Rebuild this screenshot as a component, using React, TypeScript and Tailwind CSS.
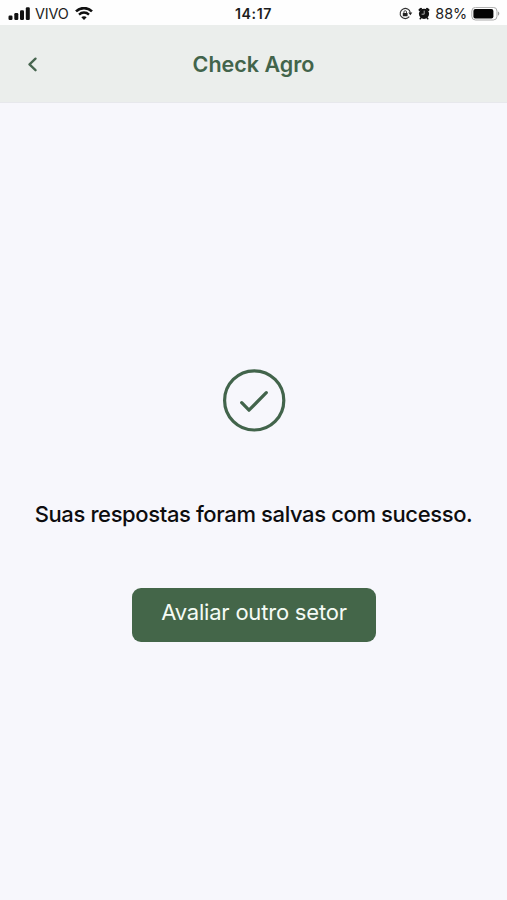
const SignalIcon = () => (
  <svg width="22" height="14" viewBox="0 0 22 14" fill="#111">
    <rect x="0.5" y="8.5" width="4" height="4.5" rx="1.2" />
    <rect x="6.3" y="6" width="4" height="7" rx="1.2" />
    <rect x="12" y="3.3" width="4" height="9.7" rx="1.2" />
    <rect x="17.8" y="0.3" width="4" height="12.7" rx="1.2" />
  </svg>
);

const WifiIcon = () => (
  <svg width="18" height="14" viewBox="0 0 18 14" fill="none" stroke="#111">
    <path d="M1 4.4C5.5 0 12.5 0 17 4.4" strokeWidth="2.6" />
    <path d="M4 7.6C6.9 4.8 11.1 4.8 14 7.6" strokeWidth="2.3" />
    <path d="M9 12.9L6.3 10.2C7.8 8.8 10.2 8.8 11.7 10.2Z" fill="#111" stroke="none" />
  </svg>
);

const RotationLockIcon = () => (
  <svg width="14" height="14" viewBox="0 0 14 14" fill="none" stroke="#333">
    <path d="M10.3 9.7A5.1 5.1 0 1 1 11.3 5.6" strokeWidth="1.1" />
    <path d="M9.3 5.5H13.3L11.4 8.3Z" fill="#222" stroke="none" />
    <rect x="3.8" y="5.9" width="4.8" height="3.4" rx="0.6" fill="#222" stroke="none" />
    <path d="M4.9 6.3V5A1.3 1.3 0 0 1 7.5 5V6.3" strokeWidth="0.9" />
  </svg>
);

const AlarmIcon = () => (
  <svg width="12" height="14" viewBox="0 0 12 14" fill="none" stroke="#111" strokeLinecap="round">
    <circle cx="6" cy="6.8" r="5.1" fill="#111" stroke="none" />
    <path d="M1.6 2.9L3 1.9M10.4 2.9L9 1.9" strokeWidth="2.2" />
    <path d="M2.8 11L2.2 11.7M9.2 11L9.8 11.7" strokeWidth="1.5" />
    <path d="M6.2 4V7.2H4" stroke="#ccc" strokeWidth="0.8" />
  </svg>
);

const BatteryIcon = () => (
  <svg width="29" height="14" viewBox="0 0 29 14" fill="none">
    <rect x="0.8" y="0.4" width="25.2" height="12.6" rx="3.7" stroke="#aaa" strokeWidth="1" />
    <rect x="2.4" y="1.9" width="20" height="9.6" rx="2" fill="#050505" />
    <path d="M27 4.5C28.8 5.2 28.8 8 27 8.7Z" fill="#999" />
  </svg>
);

const StatusBar = () => {
  return (
    <div className="grid h-[25px] grid-cols-3 items-center bg-[#fefefe] pt-[2px] text-[14px] leading-none text-[#1c1c1c]">
      <div className="flex items-center pl-2">
        <SignalIcon />
        <span className="ml-[5px] w-[35px] pt-px text-[14.4px] tracking-[-0.15px]">VIVO</span>
        <span className="ml-[5px]">
          <WifiIcon />
        </span>
      </div>
      <p className="pt-px text-center text-[14.2px] font-semibold tracking-[0.6px]">14:17</p>
      <div className="flex items-center justify-end pr-[7px]">
        <RotationLockIcon />
        <span className="ml-[5px]">
          <AlarmIcon />
        </span>
        <span className="ml-[5px] pt-px text-[14.4px] tracking-[-0.1px]">88%</span>
        <span className="ml-[4px]">
          <BatteryIcon />
        </span>
      </div>
    </div>
  );
};

const Header = () => {
  return (
    <header className="grid h-[78px] grid-cols-[64px_1fr_64px] items-center border-b border-[#e7e8ec] bg-[#ebeeec]">
      <button className="flex justify-center" aria-label="Voltar">
        <svg width="10" height="16" viewBox="0 0 10 16" fill="none">
          <path d="M8.5 2.6L2.5 8.4L8.5 14.2" stroke="#486650" strokeWidth="2.3" strokeLinecap="round" strokeLinejoin="round" />
        </svg>
      </button>
      <h1 className="pt-[2px] text-center text-[21.5px] font-semibold text-[#42644b]">Check Agro</h1>
    </header>
  );
};

export default function App() {
  return (
    <div className="flex h-[900px] w-[507px] flex-col overflow-hidden bg-[#f7f7fc] font-['Inter',sans-serif]">
      <StatusBar />
      <Header />
      <main className="flex flex-1 flex-col items-center pt-[266px]">
        <svg width="64" height="64" viewBox="0 0 64 64" fill="none" stroke="#42644b">
          <circle cx="32.2" cy="31.4" r="29.6" strokeWidth="3.2" />
          <path d="M19.7 33.7L27 41.2L44.3 23.7" strokeWidth="3.2" strokeLinecap="round" strokeLinejoin="round" />
        </svg>
        <p className="mt-[65px] h-8 whitespace-nowrap text-[22px] leading-8 font-medium tracking-[-0.38px] text-[#0d0d0f]">
          Suas respostas foram salvas com sucesso.
        </p>
        <button className="mt-[58px] ml-px h-[54px] w-[244px] rounded-[9px] bg-[#446649] pb-[5px] text-[22px] tracking-[-0.2px] whitespace-nowrap text-[#f5fbf5]">
          Avaliar outro setor
        </button>
      </main>
    </div>
  );
}
